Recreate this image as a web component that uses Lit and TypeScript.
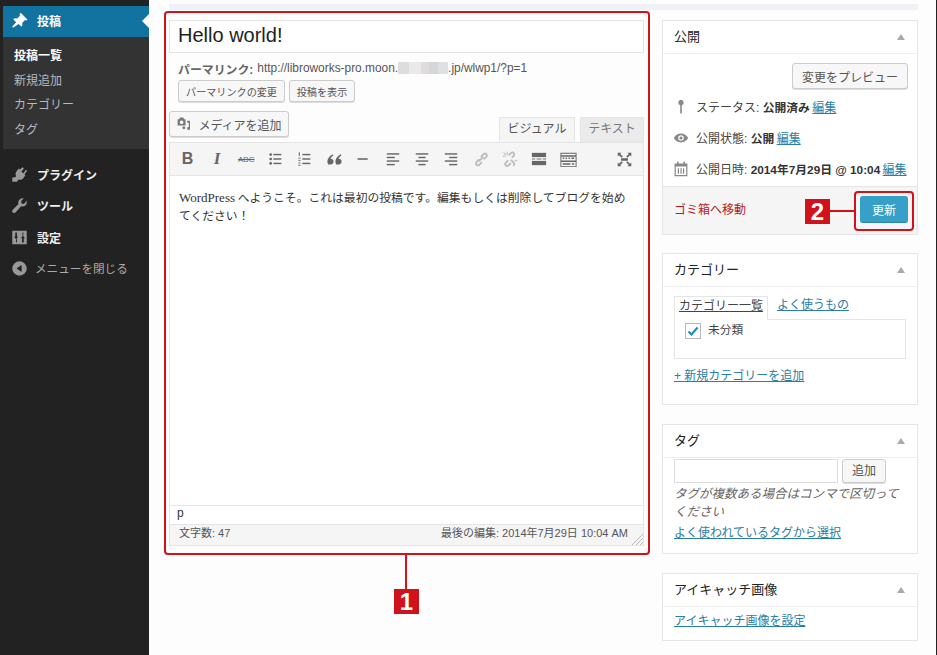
import { css, html, LitElement, svg } from "lit";
import { customElement } from "lit/decorators.js";

const icon = (size: number, body: unknown, box = "0 0 20 20") => html`
    <svg width=${size} height=${size} viewBox=${box} fill="currentColor">${body}</svg>
`;

const lines = (rows: [number, number, number][]) =>
    rows.map(([x1, x2, y]) => svg`<rect x=${x1} y=${y} width=${x2 - x1} height="1.6"></rect>`);

const menuIcons = {
    pin: svg`<path d="M11.5 1l8 8-1.800 1-1.200-.6-3.400 3.400c.6 1.800.2 3.400-.8 4.600l-3.400-3.400L2.500 18.500l-1.200-1.200L6 12 2.600 8.500c1.200-1 2.800-1.400 4.600-.8L10.600 4.300 10 3z"></path>`,
    plug: svg`<path d="M13.500 1.500l1.700 1.300-3 4 2.300 1.700 3-4 1.500 1.200-3.200 4.200 1.200 1-2.600 3.400c-1.500 1.900-3.600 2.300-5.500 1.500L7 18.500H1.500v-5l3.500-.3 1-1.300c-.9-1.800-.8-3.900.6-5.700l2.500-3.200 1.200 1z"></path>`,
    wrench: svg`<path d="M18.300 4.500c.7 2 .2 4.200-1.300 5.500-1.500 1.300-3.400 1.600-5.100 1L5.500 18c-.9 1-2.300 1.100-3.300.2-1-.9-1-2.300-.1-3.300L8.800 8.300c-.7-1.800-.3-3.800 1.100-5.200 1.300-1.300 3.200-1.800 5-1.300l-3 3 .6 2.800 2.800.6z"></path>`,
    settings: svg`<path fill-rule="evenodd" d="M1.500 2h17v16h-17zM5 4v5H3.500l2.500 3 2.500-3H7V4zM6 12v4h1v-4zM13 16V11h-1.500L14 8l2.500 3H15v5zM13.500 4v4h1V4z"></path>`,
    collapse: svg`<path fill-rule="evenodd" d="M10 1.500a8.500 8.500 0 1 0 0 17 8.500 8.500 0 0 0 0-17zm2.500 4.500v8L6.500 10z"></path>`,
};

const toolIcons = [
    html`<span class="t-b">B</span>`,
    html`<span class="t-i">I</span>`,
    html`<span class="t-abc">ABC</span>`,
    icon(16, svg`<circle cx="3" cy="4" r="1.500"></circle><circle cx="3" cy="9" r="1.500"></circle><circle cx="3" cy="14" r="1.500"></circle>${lines([[6, 15, 3.200], [6, 15, 8.200], [6, 15, 13.200]])}`, "0 0 18 18"),
    icon(16, svg`<rect x="2" y="1.500" width="1.200" height="4"></rect><rect x="1.500" y="7.500" width="2.500" height="1"></rect><rect x="1.500" y="10" width="2.500" height="1"></rect><rect x="1.500" y="13" width="2.500" height="1"></rect><rect x="1.500" y="15.500" width="2.500" height="1"></rect>${lines([[6, 15, 3.200], [6, 15, 8.200], [6, 15, 13.200]])}`, "0 0 18 18"),
    icon(17, svg`<path d="M3 15c-1.500-1.800-1.900-3.800-1.200-5.700C2.500 7 4.300 5 7 3.500l.8 1.300C6 6 5 7.200 4.800 8.300c1.800-.2 3.200 1 3.200 2.800 0 1.700-1.200 3.200-3 3.200-.8 0-1.500-.2-2-.3zM11.500 15c-1.500-1.800-1.900-3.800-1.200-5.700.7-2.300 2.500-4.300 5.200-5.800l.8 1.300c-1.800 1.200-2.800 2.400-3 3.500 1.800-.2 3.200 1 3.200 2.800 0 1.700-1.200 3.200-3 3.200-.8 0-1.500-.2-2-.3z"></path>`, "0 0 18 18"),
    icon(14, svg`<rect x="1" y="8" width="13" height="2"></rect>`, "0 0 16 18"),
    icon(16, svg`${lines([[2, 16, 2.500], [2, 11, 6.500], [2, 16, 10.500], [2, 11, 14.500]])}`, "0 0 18 18"),
    icon(16, svg`${lines([[2, 16, 2.500], [5, 13, 6.500], [2, 16, 10.500], [5, 13, 14.500]])}`, "0 0 18 18"),
    icon(16, svg`${lines([[2, 16, 2.500], [7, 16, 6.500], [2, 16, 10.500], [7, 16, 14.500]])}`, "0 0 18 18"),
    html`<span class="faint">${icon(18, svg`<g fill="none" stroke="currentColor" stroke-width="2"><path d="M8 10.500l-3.300 3.300a2.200 2.200 0 0 0 3 3L11 13.500"></path><path d="M10 7.500l3.300-3.300a2.200 2.200 0 0 1 3 3L13 10.500"></path><path d="M7.500 12.500l5-5"></path></g>`)}</span>`,
    html`<span class="faint">${icon(18, svg`<g fill="none" stroke="currentColor" stroke-width="2"><path d="M8 11.500l-3 3a2.200 2.200 0 0 0 3 3l3-3"></path><path d="M12 8.500l2.500-2.500a2.200 2.200 0 0 0-3-3l-3 3"></path><path d="M11 11l3 3a2.200 2.200 0 0 1-.5 3.500"></path></g><g fill="none" stroke="currentColor" stroke-width="1.200"><path d="M3 3l3 3M2 7h3M7 2v3M15 12h3"></path></g>`)}</span>`,
    icon(18, svg`<rect x="2" y="3" width="15" height="4.500"></rect><rect x="2" y="9" width="3.500" height="1"></rect><rect x="7" y="9" width="5" height="1"></rect><rect x="13.500" y="9" width="3.500" height="1"></rect><rect x="2" y="11.500" width="15" height="4.500"></rect>`, "0 0 19 19"),
    icon(19, svg`<path fill-rule="evenodd" d="M1.500 3h17v15h-17zM2.500 4v1.500h15V4zM2.500 7v4h15V7zM2.500 12.500V17h15v-4.500z"></path><path d="M4 8h1.500v1.500H4zM7 8h1.500v1.500H7zM10 8h1.500v1.500H10zM13 8h3v1.500h-3zM4 14h8v1.500H4zM13.500 14H16v1.500h-2.500z"></path>`, "0 0 20 20"),
];

@customElement("app-root")
export class AppRoot extends LitElement {
    static styles = css`
        :host {
            display: flex;
            position: relative;
            width: 937px;
            height: 655px;
            overflow: hidden;
            background: #fdfdfd;
            border-right: 1px solid #222;
            box-sizing: border-box;
            font-family: "Liberation Sans", "Noto Sans CJK JP", sans-serif;
            font-size: 12px;
            color: #444;
        }

        a {
            color: #2a7ea6;
            text-decoration: underline;
        }

        .sidebar {
            flex: none;
            width: 149px;
            background: #222;
            padding: 6px 0 0 3px;
            box-sizing: border-box;
            color: #eee;
        }

        .item {
            display: flex;
            align-items: center;
            height: 31.400px;
            padding-left: 8px;
            font-size: 12px;
            font-weight: bold;
            color: #eee;

            svg {
                flex: none;
                width: 17px;
                height: 17px;
                margin-right: 9px;
                color: #999;
            }
        }

        .item.current {
            position: relative;
            height: 31px;
            background: #1273a0;
            color: #fff;
            padding-bottom: 2px;
            box-sizing: border-box;

            svg {
                color: #fff;
            }

            &::after {
                content: "";
                position: absolute;
                right: 0;
                top: 8px;
                border: 7.500px solid transparent;
                border-left-width: 0;
                border-right-color: #fdfdfd;
            }
        }

        .sub {
            background: #333;
            height: 112px;
            padding-top: 7px;
            box-sizing: border-box;
            margin-bottom: 9.600px;
            font-size: 12px;

            div {
                height: 24.500px;
                line-height: 24.500px;
                padding-left: 11px;
                color: #b4b9be;
            }

            .on {
                color: #fff;
                font-weight: bold;
            }
        }

        .collapse {
            font-weight: normal;
            font-size: 11.600px;
            color: #aaa;
        }

        .collapse svg {
            margin-right: 7px;
        }

        .main {
            flex: 1;
            padding: 4px 18px 0 20px;
        }

        .strip {
            height: 6px;
            background: #eff1f6;
            margin-bottom: 10px;
        }

        .cols {
            display: flex;
            gap: 18px;
        }

        .editor-col {
            flex: none;
            width: 475px;
        }

        .side-col {
            flex: 1;
            display: flex;
            flex-direction: column;
            gap: 18px;
        }

        .title {
            height: 33px;
            box-sizing: border-box;
            border: 1px solid #e3e3e3;
            background: #fff;
            padding-left: 8px;
            font-size: 20px;
            line-height: 29px;
            color: #222;
        }

        .permalink {
            display: flex;
            align-items: center;
            height: 14px;
            margin: 8px 0 5px 9px;
            font-size: 11.900px;
            color: #555;

            b {
                margin-right: 4px;
                color: #666;
            }
        }

        .mosaic {
            width: 50px;
            height: 12px;
            background: linear-gradient(90deg, #ddd 0 22%, #eaeaea 22% 46%, #e0dcdc 46% 62%, #d4d6da 62% 80%, #dfe0e4 80%);
        }

        .btn {
            display: inline-flex;
            align-items: center;
            justify-content: center;
            box-sizing: border-box;
            border: 1px solid #ccc;
            border-radius: 3px;
            background: #f7f7f7;
            box-shadow: 0 1px 0 #ddd;
            color: #555;
        }

        .perma-btns {
            display: flex;
            gap: 4px;
            margin-left: 9px;
            font-size: 10.100px;

            .btn {
                height: 22px;
            }
        }

        .media-row {
            display: flex;
            justify-content: space-between;
            align-items: flex-end;
            margin-top: 9px;
            height: 31px;
        }

        .media {
            width: 120px;
            height: 26px;
            margin-bottom: 5px;
            font-size: 12px;
            gap: 6px;

            svg {
                color: #777;
            }
        }

        .tabs {
            display: flex;
            gap: 5px;

            div {
                height: 25px;
                line-height: 23px;
                box-sizing: border-box;
                text-align: center;
                font-size: 12px;
                border: 1px solid #e5e5e5;
            }

            .vis {
                width: 76px;
                background: #f5f5f5;
                border-bottom-color: #f5f5f5;
                color: #555;
            }

            .txt {
                width: 64px;
                background: #ebebeb;
                color: #777;
            }
        }

        .editor {
            border: 1px solid #e5e5e5;
            background: #fff;
        }

        .toolbar {
            display: flex;
            height: 33px;
            box-sizing: border-box;
            padding-left: 3px;
            background: #f5f5f5;
            border-bottom: 1px solid #e5e5e5;
            color: #666;

            span {
                flex: none;
            }

            .tool {
                display: flex;
                align-items: center;
                justify-content: center;
                width: 29.300px;
            }

            .full {
                margin-left: auto;
                margin-right: 4px;
            }

            .faint {
                display: flex;
                color: #bbb;
            }
        }

        .t-b {
            font: bold 16px "Liberation Sans", sans-serif;
        }

        .t-i {
            font: italic bold 17px "Liberation Serif", serif;
        }

        .t-abc {
            font-size: 8px;
            text-decoration: line-through;
        }

        .content {
            height: 329px;
            box-sizing: border-box;
            padding: 12px 9px;
            font: 11.800px/17.500px "Noto Sans CJK JP", serif;
            color: #333;

            span {
                font: 13px "Liberation Serif", serif;
            }
        }

        .path {
            height: 18px;
            line-height: 15px;
            padding-left: 7px;
            border-top: 1px solid #e5e5e5;
            font-size: 12px;
            color: #333;
        }

        .status {
            display: flex;
            justify-content: space-between;
            position: relative;
            height: 21px;
            line-height: 17px;
            box-sizing: border-box;
            padding: 0 15px 0 9px;
            background: #f5f5f5;
            border-top: 1px solid #e5e5e5;
            font-size: 11px;
            color: #555;

            svg {
                position: absolute;
                right: 0;
                bottom: 0;
            }
        }

        .box {
            border: 1px solid #e5e5e5;
            background: #fff;
            box-sizing: border-box;
        }

        .box.apart {
            margin-top: 1px;
        }

        .box-head {
            display: flex;
            flex: none;
            justify-content: space-between;
            align-items: center;
            height: 33px;
            box-sizing: border-box;
            padding: 0 12px 3px 11px;
            border-bottom: 1px solid #eee;
            font-size: 13px;
            color: #222;

            i {
                margin-top: 3px;
                border: 4px solid transparent;
                border-top-width: 0;
                border-bottom: 6px solid #aaa;
            }
        }

        .publish {
            height: 215px;
            display: flex;
            flex-direction: column;
        }

        .preview-row {
            display: flex;
            flex: none;
            justify-content: flex-end;
            padding: 9px 9px 0 0;
            margin-bottom: 2px;
        }

        .preview {
            width: 116px;
            height: 26px;
            font-size: 12px;
        }

        .meta {
            display: flex;
            flex: none;
            align-items: center;
            height: 31px;
            padding-left: 10px;
            gap: 4px;
            font-size: 12px;
            color: #444;

            svg {
                flex: none;
                width: 16px;
                height: 16px;
                color: #888;
                margin-right: 3px;
            }

            b {
                color: #333;
                font-size: 11.800px;
            }

            a {
                margin-left: -1px;
            }
        }

        .pub-foot {
            margin-top: auto;
            height: 48px;
            display: flex;
            flex: none;
            align-items: center;
            justify-content: space-between;
            box-sizing: border-box;
            padding: 0 9px 0 11px;
            background: #f5f5f5;
            border-top: 1px solid #e5e5e5;

            a {
                color: #b3202a;
                text-decoration: none;
                margin-top: -4px;
            }
        }

        .update {
            display: flex;
            align-items: center;
            justify-content: center;
            width: 48px;
            height: 27px;
            margin-top: -2px;
            border-radius: 3px;
            background: #36a0c9;
            border-bottom: 1px solid #2a85a8;
            box-sizing: border-box;
            color: #fff;
            font-size: 12px;
        }

        .body {
            padding: 8px 11px 0;
        }

        .cat-tabs {
            display: flex;
            height: 24px;
            margin-top: 1px;
            gap: 9px;
            font-size: 12px;

            div {
                width: 94px;
                height: 24px;
                line-height: 19px;
                box-sizing: border-box;
                text-align: center;
                border: 1px solid #e5e5e5;
                border-bottom: 1px solid #fff;
                margin-bottom: -1px;
                position: relative;
                color: #444;
                text-decoration: underline;
            }

            a {
                line-height: 19px;
            }
        }

        .cat-list {
            display: flex;
            align-items: flex-start;
            gap: 7px;
            height: 40px;
            box-sizing: border-box;
            margin-top: -1px;
            padding: 3px 0 0 10px;
            border: 1px solid #e5e5e5;
            font-size: 11.700px;
            line-height: 13px;
        }

        .check {
            display: flex;
            align-items: center;
            justify-content: center;
            width: 14px;
            height: 14px;
            border: 1px solid #b4b9be;
            background: #fff;
            color: #1e8cbe;
        }

        .add-link {
            margin-top: 7px;
            height: 30px;
        }

        .tag-row {
            display: flex;
            gap: 4px;
            margin-top: -7px;

            div:first-child {
                width: 164px;
                height: 24px;
                box-sizing: border-box;
                border: 1px solid #ddd;
            }

            .btn {
                width: 44px;
                height: 24px;
                padding-bottom: 4px;
            }
        }

        .help {
            margin: 3px 0 0;
            font-style: italic;
            font-size: 12.500px;
            line-height: 17.500px;
            color: #666;
        }

        .tag-link {
            margin-top: 2px;
            height: 20px;
        }

        .feat {
            padding-top: 4px;
            height: 35px;
            box-sizing: border-box;
        }

        .ann {
            position: absolute;
            box-sizing: border-box;
            border: 2px solid #d0121b;
        }

        .frame {
            border-radius: 4px;
        }

        .rule {
            position: absolute;
            background: #d0121b;
        }

        .badge {
            position: absolute;
            width: 25px;
            height: 25px;
            background: #d0121b;
            color: #fff;
            font: bold 24px/25px "Liberation Sans", sans-serif;
            text-align: center;
        }
    `;

    render() {
        return html`
            <nav class="sidebar">
                <div class="item current">${icon(17, menuIcons.pin)}投稿</div>
                <div class="sub">
                    <div class="on">投稿一覧</div>
                    <div>新規追加</div>
                    <div>カテゴリー</div>
                    <div>タグ</div>
                </div>
                <div class="item">${icon(17, menuIcons.plug)}プラグイン</div>
                <div class="item">${icon(17, menuIcons.wrench)}ツール</div>
                <div class="item">${icon(17, menuIcons.settings)}設定</div>
                <div class="item collapse">${icon(17, menuIcons.collapse)}メニューを閉じる</div>
            </nav>

            <main class="main">
                <div class="strip"></div>
                <div class="cols">
                    <section class="editor-col">
                        <div class="title">Hello world!</div>
                        <div class="permalink">
                            <b>パーマリンク:</b>http://libroworks-pro.moon.<span class="mosaic"></span>.jp/wlwp1/?p=1
                        </div>
                        <div class="perma-btns">
                            <span class="btn" style="width:107px">パーマリンクの変更</span>
                            <span class="btn" style="width:66px">投稿を表示</span>
                        </div>
                        <div class="media-row">
                            <span class="btn media">
                                ${icon(16, svg`<path fill-rule="evenodd" d="M2 4h2l1-2h4l1 2h2v8H2zM7 5.500a2.300 2.300 0 1 0 0 4.600 2.300 2.300 0 0 0 0-4.600z"></path><path d="M14 6h3.500v9.500a1.800 1.800 0 1 1-1.500-1.700V8.500h-2zM8 14.500a1.800 1.800 0 1 1 0 .1z"></path>`)}
                                メディアを追加
                            </span>
                            <div class="tabs">
                                <div class="vis">ビジュアル</div>
                                <div class="txt">テキスト</div>
                            </div>
                        </div>
                        <div class="editor">
                            <div class="toolbar">
                                ${toolIcons.map((t) => html`<span class="tool">${t}</span>`)}
                                <span class="tool full">
                                    ${icon(17, svg`<path d="M2 2h4.500L5 3.500 8 6.500 6.500 8 3.500 5 2 6.500zM18 2v4.500L16.500 5l-3 3L12 6.500l3-3L13.500 2zM2 18v-4.500L3.500 15l3-3L8 13.500l-3 3L6.500 18zM18 18h-4.500l1.500-1.500-3-3L13.500 12l3 3 1.500-1.500z"></path><rect x="6" y="8.500" width="8" height="3"></rect>`)}
                                </span>
                            </div>
                            <div class="content">
                                <span>WordPress</span> へようこそ。これは最初の投稿です。編集もしくは削除してブログを始め<br />てください！
                            </div>
                            <div class="path">p</div>
                            <div class="status">
                                <span>文字数: 47</span>
                                <span>最後の編集: 2014年7月29日 10:04 AM</span>
                                <svg width="12" height="12" viewBox="0 0 12 12" fill="none" stroke="#bbb">
                                    <path d="M12 1L1 12M12 5L5 12M12 9L9 12"></path>
                                </svg>
                            </div>
                        </div>
                    </section>

                    <aside class="side-col">
                        <div class="box publish">
                            <div class="box-head">公開<i></i></div>
                            <div class="preview-row"><span class="btn preview">変更をプレビュー</span></div>
                            <div class="meta">
                                ${icon(16, svg`<path d="M10 1a3.500 3.500 0 0 1 1 6.800V18H9V7.800A3.500 3.500 0 0 1 10 1z"></path>`)}
                                <span>ステータス: <b>公開済み</b> <a>編集</a></span>
                            </div>
                            <div class="meta">
                                ${icon(16, svg`<path fill-rule="evenodd" d="M1 10c2-3.500 5.200-5.500 9-5.500s7 2 9 5.500c-2 3.500-5.200 5.500-9 5.500S3 13.500 1 10zm9-3.500a3.500 3.500 0 1 0 0 7 3.500 3.500 0 0 0 0-7z"></path><circle cx="10" cy="10" r="2"></circle>`)}
                                <span>公開状態: <b>公開</b> <a>編集</a></span>
                            </div>
                            <div class="meta">
                                ${icon(16, svg`<path fill-rule="evenodd" d="M5 1h2v2h6V1h2v2h3v16H2V3h3zM3.500 7v10.500h13V7zM6 9h1.500v7H6zM9.300 9h1.500v7H9.300zM12.500 9H14v7h-1.500z"></path>`)}
                                <span>公開日時: <b>2014年7月29日 @ 10:04</b> <a>編集</a></span>
                            </div>
                            <div class="pub-foot">
                                <a>ゴミ箱へ移動</a>
                                <span class="update">更新</span>
                            </div>
                        </div>

                        <div class="box" style="height:152px">
                            <div class="box-head">カテゴリー<i></i></div>
                            <div class="body">
                                <div class="cat-tabs">
                                    <div>カテゴリー一覧</div>
                                    <a>よく使うもの</a>
                                </div>
                                <div class="cat-list">
                                    <span class="check">
                                        <svg width="12" height="12" viewBox="0 0 12 12" fill="none" stroke="currentColor" stroke-width="2.200"><path d="M1.500 6.500l3 3 6-7"></path></svg>
                                    </span>
                                    未分類
                                </div>
                                <div class="add-link"><a>+ 新規カテゴリーを追加</a></div>
                            </div>
                        </div>

                        <div class="box apart" style="height:130px">
                            <div class="box-head">タグ<i></i></div>
                            <div class="body">
                                <div class="tag-row">
                                    <div></div>
                                    <span class="btn">追加</span>
                                </div>
                                <p class="help">タグが複数ある場合はコンマで区切ってください</p>
                                <div class="tag-link"><a>よく使われているタグから選択</a></div>
                            </div>
                        </div>

                        <div class="box apart" style="height:68px">
                            <div class="box-head">アイキャッチ画像<i></i></div>
                            <div class="body feat"><a>アイキャッチ画像を設定</a></div>
                        </div>
                    </aside>
                </div>
            </main>

            <div class="ann frame" style="left:164px;top:11px;width:486px;height:544px"></div>
            <div class="rule" style="left:405px;top:554px;width:2px;height:36px"></div>
            <div class="badge" style="left:394px;top:589px">1</div>
            <div class="ann frame" style="left:854px;top:191px;width:60px;height:40px"></div>
            <div class="rule" style="left:829px;top:210px;width:26px;height:2px"></div>
            <div class="badge" style="left:805px;top:199px">2</div>
        `;
    }
}
